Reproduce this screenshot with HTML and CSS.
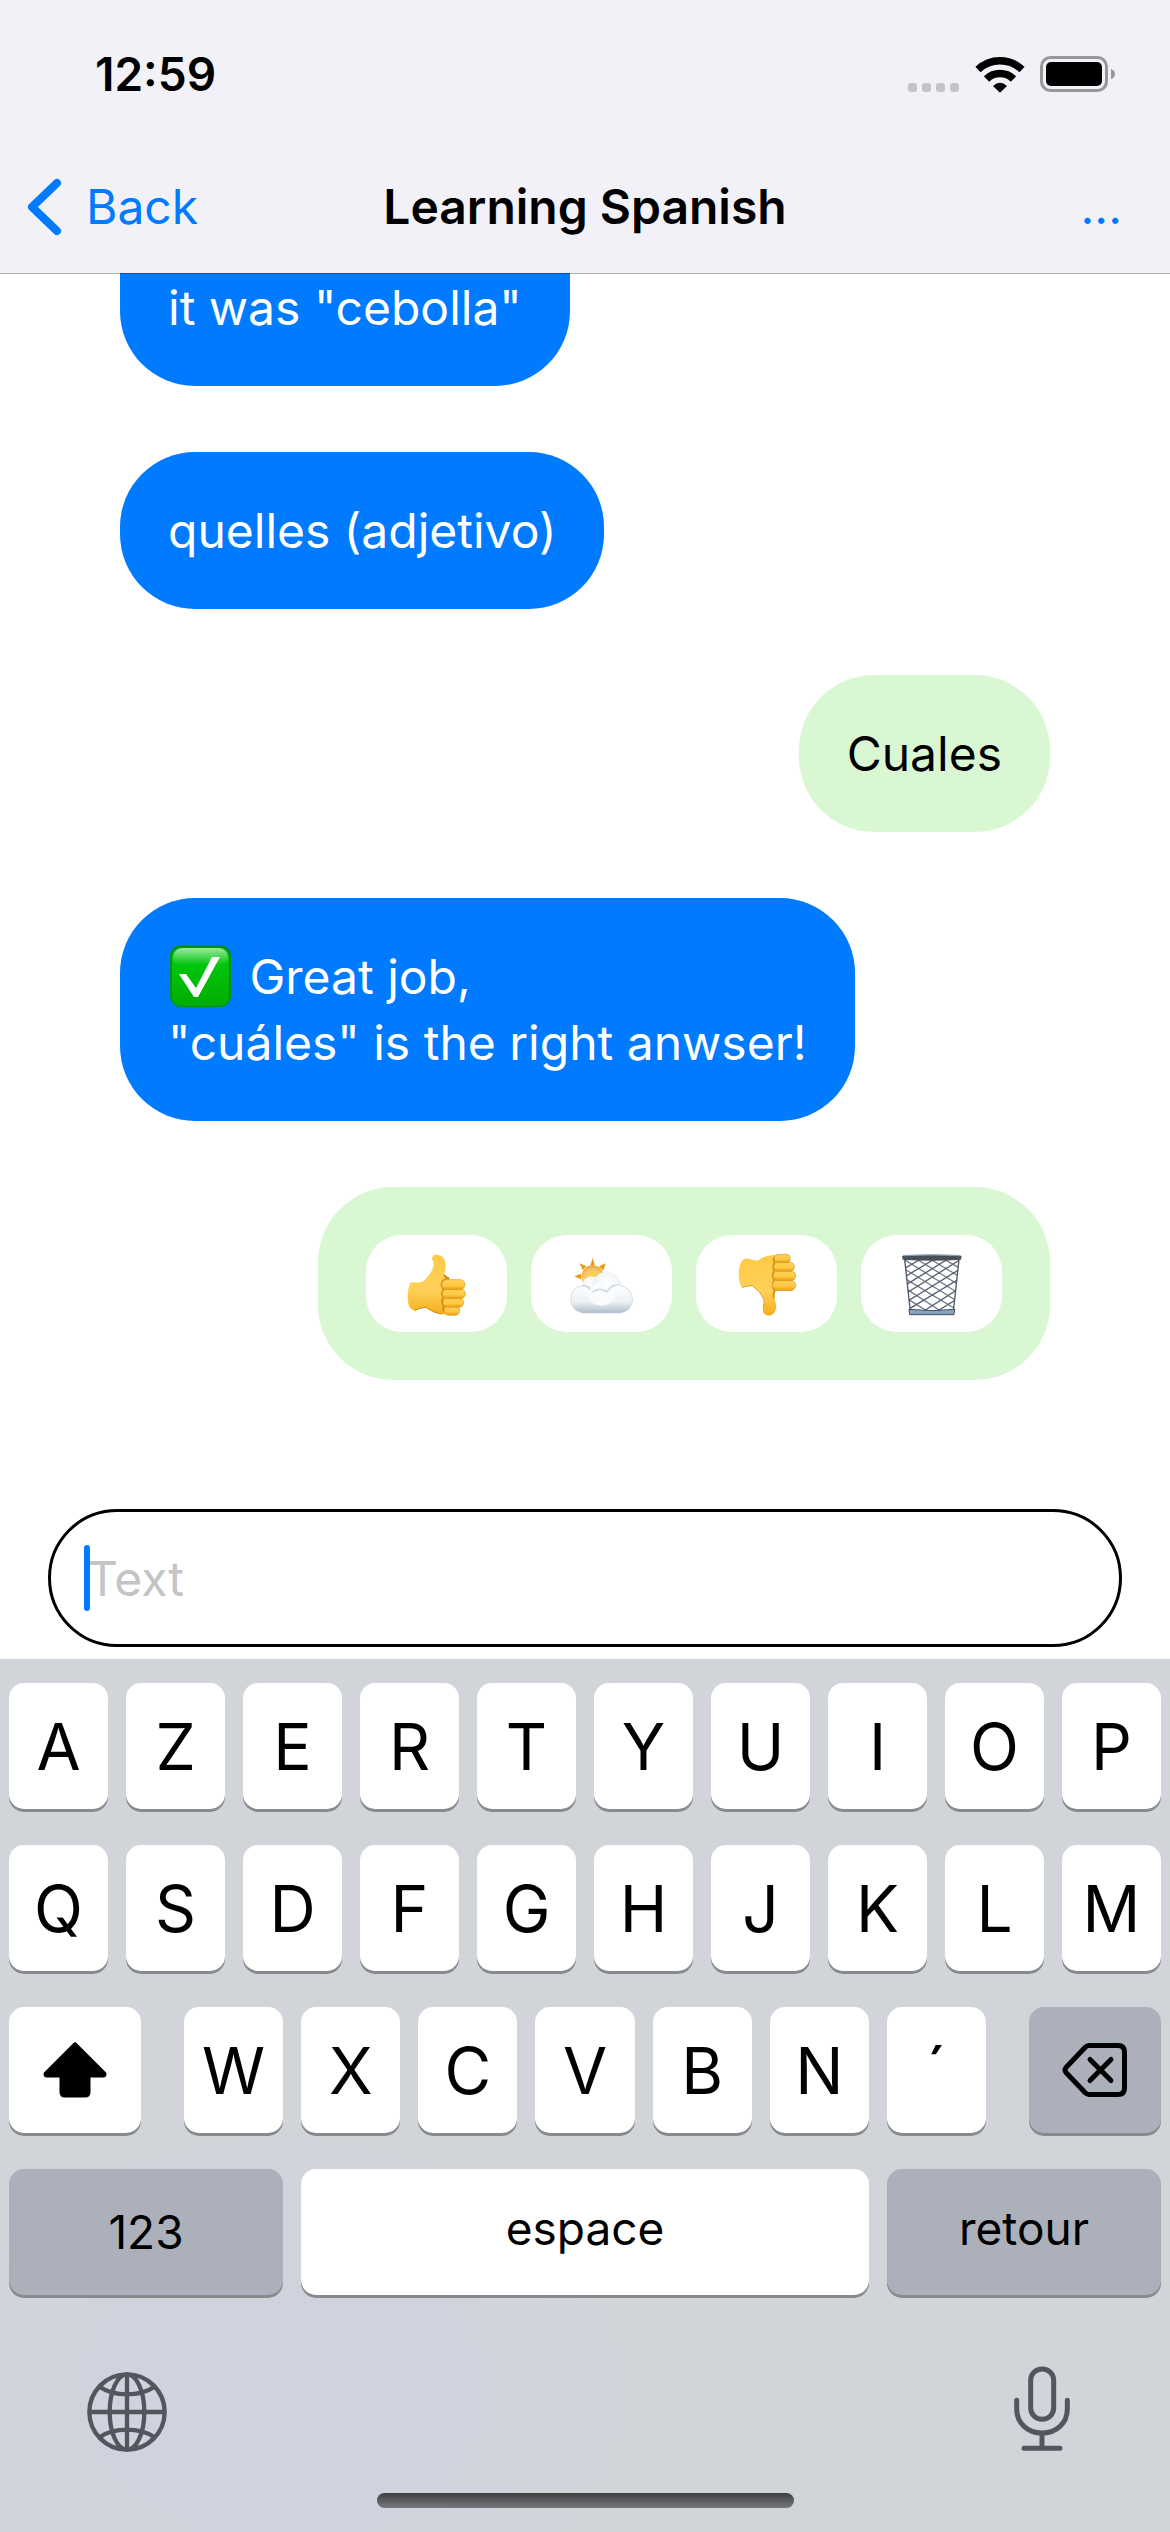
FILE: index.html
```html
<!DOCTYPE html>
<html lang="en">
<head>
<meta charset="utf-8">
<meta name="viewport" content="width=device-width, initial-scale=1">
<title>Learning Spanish</title>
<link rel="stylesheet" href="styles.css">
</head>
<body>
<div class="app">
  <header class="header">
    <div class="status">
      <time class="status-time">12:59</time>
      <div class="status-icons">
        <svg width="52" height="37" viewBox="0 0 52 37" fill="#c4c3c8" aria-hidden="true">
          <rect x="0" y="27" width="9" height="9" rx="3"/><rect x="14" y="27" width="9" height="9" rx="3"/><rect x="28" y="27" width="9" height="9" rx="3"/><rect x="42" y="27" width="9" height="9" rx="3"/>
        </svg>
        <svg width="50" height="37" viewBox="0 0 50 37" aria-hidden="true">
          <path d="M3 13.500A32 32 0 0 1 47 13.500M11.500 23A19.500 19.500 0 0 1 38.500 23" fill="none" stroke="#000" stroke-width="7.500"/>
          <path d="M18 30Q25 23.500 32 30L25.800 36Q25 36.800 24.200 36Z"/>
        </svg>
        <svg width="76" height="37" viewBox="0 0 76 37" aria-hidden="true">
          <rect x="1.500" y="1.500" width="65" height="33" rx="9" fill="none" stroke="#97969b" stroke-width="3"/>
          <rect x="6" y="6" width="56" height="24" rx="5"/>
          <path d="M71 13Q75 14.500 75 18Q75 21.500 71 23Z" fill="#97969b"/>
        </svg>
      </div>
    </div>
    <nav class="nav">
      <a class="nav-back" href="#">
        <svg width="36" height="60" viewBox="0 0 36 60" aria-hidden="true"><path d="M31 6L6 30L31 54" fill="none" stroke="currentColor" stroke-width="8" stroke-linecap="round" stroke-linejoin="round"/></svg>
        <span>Back</span>
      </a>
      <h1 class="nav-title">Learning Spanish</h1>
      <button class="nav-more" type="button" aria-label="More options">...</button>
    </nav>
  </header>

  <main class="thread">
    <p class="bubble bubble-bot bubble-continued">it was "cebolla"</p>
    <p class="bubble bubble-bot">quelles (adjetivo)</p>
    <p class="bubble bubble-user">Cuales</p>
    <p class="bubble bubble-bot"><svg class="check" width="64" height="62" viewBox="0 0 64 62" role="img" aria-label="Correct">
        <defs><linearGradient id="shine" x1="0" y1="0" x2="0" y2="1"><stop offset="0" stop-color="#9be8a3"/><stop offset="1" stop-color="#00c40b"/></linearGradient>
        <linearGradient id="green" x1="0" y1="0" x2="0" y2="1"><stop offset="0" stop-color="#00cf12"/><stop offset="1" stop-color="#00ad00"/></linearGradient></defs>
        <rect x="2" y="0" width="61" height="62" rx="11" fill="#058f16"/>
        <rect x="4" y="3" width="57" height="58" rx="9" fill="url(#green)"/>
        <path d="M5 15Q5 3 15 3H50Q60 3 60 15Q56 20 50 20H15Q9 20 5 15Z" fill="url(#shine)"/>
        <path d="M11 29H18L28 43L44 12H52L30 52H26Z" fill="#fff"/>
      </svg> Great job,<br>"cuáles" is the right anwser!</p>
    <div class="bubble-user options">
      <button class="option" type="button" aria-label="Thumbs up">
        <svg viewBox="310 241 198 198">
          <defs><linearGradient id="skin" x1="0" y1="0" x2="0" y2="1"><stop offset="0" stop-color="#ffcb45"/><stop offset=".6" stop-color="#ffd05a"/><stop offset="1" stop-color="#f5ad1b"/></linearGradient>
          <linearGradient id="finger" x1="0" y1="0" x2="0" y2="1"><stop offset="0" stop-color="#ffd25c"/><stop offset=".6" stop-color="#ffc83e"/><stop offset="1" stop-color="#e59a12"/></linearGradient></defs>
          <path d="M330 335Q350 337 366 333Q392 312 398 287Q400 276 394 264Q395 251 410 252Q430 254 434 276Q437 294 430 312Q433 318 445 324L472 360L460 428Q440 432 424 430Q400 429 376 411Q358 411 342 420Q323 416 321 385Q321 350 330 335Z" fill="url(#skin)"/>
          <path d="M342 419Q357 411 376 410Q400 428 424 430" fill="none" stroke="#d38a10" stroke-width="3"/>
          <path d="M430 312Q433 320 446 324Q424 324 422 343Q423 352 429 357Q419 367 428 380Q419 395 430 406Q424 415 431 424" fill="none" stroke="#cf8b12" stroke-width="5"/>
          <g fill="url(#finger)" stroke="#dc9b1c" stroke-width="2">
            <rect x="430" y="406" width="47" height="28" rx="14"/><rect x="427" y="382" width="62" height="28" rx="14"/><rect x="425" y="355" width="69" height="29" rx="14"/><rect x="423" y="327" width="70" height="30" rx="15"/>
          </g>
        </svg>
      </button>
      <button class="option" type="button" aria-label="So-so">
        <svg viewBox="805 241 198 198">
          <defs><radialGradient id="sun" cx=".5" cy=".65" r=".65"><stop offset="0" stop-color="#ffe22c"/><stop offset=".65" stop-color="#f6c96a"/><stop offset="1" stop-color="#e9a545"/></radialGradient>
          <radialGradient id="puff" cx=".5" cy=".4" r=".65"><stop offset="0" stop-color="#fff"/><stop offset=".65" stop-color="#f1f4f7"/><stop offset="1" stop-color="#b9c5d3"/></radialGradient>
          <linearGradient id="base" x1="0" y1="0" x2="0" y2="1"><stop offset="0" stop-color="#fff"/><stop offset=".6" stop-color="#edf1f5"/><stop offset="1" stop-color="#aebccb"/></linearGradient></defs>
          <path d="M876 262L883 285H869ZM837 278L857 287L846 299ZM915 278L908 300L895 287ZM821 317L841 309V326Z" fill="#e79a12"/>
          <circle cx="876" cy="318" r="34" fill="url(#sun)"/>
          <circle cx="872" cy="346" r="29" fill="url(#puff)"/>
          <circle cx="918" cy="345" r="42" fill="url(#puff)"/>
          <path d="M810 386Q811 349 848 345Q860 344 872 352Q884 340 920 352Q934 342 954 343Q994 350 996 386Q994 421 960 427H846Q812 421 810 386Z" fill="url(#base)" stroke="#c5cfdb" stroke-width="2"/>
          <ellipse cx="902" cy="371" rx="40" ry="34" fill="#fafbfc"/>
          <path d="M875 365Q898 347 918 364Q929 345 948 344M845 345Q858 345 870 357" fill="none" stroke="#ccd5df" stroke-width="4"/>
        </svg>
      </button>
      <button class="option" type="button" aria-label="Thumbs down">
        <svg viewBox="160 241 198 198">
          <path d="M197 263Q213 268 231 270Q250 253 280 253L315 258L320 340L285 362Q278 376 287 405Q286 434 262 435Q243 431 247 409Q253 397 249 385Q240 362 215 345Q200 345 184 351Q174 340 174 305Q178 264 197 263Z" fill="url(#skin)"/>
          <path d="M184 350Q200 345 215 345Q240 362 249 385Q253 397 247 410" fill="none" stroke="#dda02b" stroke-width="3"/>
          <path d="M283 257Q276 266 281 276Q274 288 281 300Q271 316 281 328Q270 345 282 360Q278 366 279 382" fill="none" stroke="#d28d17" stroke-width="5"/>
          <g fill="url(#finger)" stroke="#dc9b1c" stroke-width="2">
            <rect x="275" y="328" width="70" height="32" rx="16"/><rect x="278" y="301" width="67" height="29" rx="14"/><rect x="279" y="275" width="62" height="27" rx="13"/><rect x="281" y="251" width="48" height="25" rx="12"/>
          </g>
        </svg>
      </button>
      <button class="option" type="button" aria-label="Delete">
        <svg viewBox="655 241 198 198">
          <defs><clipPath id="bin"><path d="M671 266H836L819 426H688Z"/></clipPath></defs>
          <g clip-path="url(#bin)" fill="none" stroke-width="4">
            <path stroke="#6e8197" d="M660 400L730 440M660 372L770 440M660 344L810 440M660 316L850 430M660 288L850 404M660 260L850 378M690 254L850 352M730 254L850 326M770 254L850 300M810 254L850 277"/>
            <path stroke="#5b6069" d="M850 400L780 440M850 372L740 440M850 344L700 440M850 316L660 430M850 288L660 404M850 260L660 378M820 254L660 352M780 254L660 326M740 254L660 300M700 254L660 277"/>
          </g>
          <path d="M672 266L689 422M835 266L818 422" fill="none" stroke="#515b68" stroke-width="4"/>
          <path d="M685 416Q754 424 822 416L820 432H687Z" fill="#87a3c4" stroke="#484d55" stroke-width="3"/>
          <path d="M664 256Q754 249 843 256L841 267Q754 273 666 267Z" fill="#4a4e57"/>
          <path d="M667 255Q754 250 840 255" fill="none" stroke="#86a2c0" stroke-width="4"/>
        </svg>
      </button>
    </div>
  </main>

  <form class="composer">
    <label class="field">
      <input class="field-input" type="text" placeholder="Text" aria-label="Message">
      <span class="caret"></span>
    </label>
  </form>

  <section class="keyboard" aria-label="Keyboard">
    <div class="key-row">
      <button class="key" type="button">A</button><button class="key" type="button">Z</button><button class="key" type="button">E</button><button class="key" type="button">R</button><button class="key" type="button">T</button><button class="key" type="button">Y</button><button class="key" type="button">U</button><button class="key" type="button">I</button><button class="key" type="button">O</button><button class="key" type="button">P</button>
    </div>
    <div class="key-row">
      <button class="key" type="button">Q</button><button class="key" type="button">S</button><button class="key" type="button">D</button><button class="key" type="button">F</button><button class="key" type="button">G</button><button class="key" type="button">H</button><button class="key" type="button">J</button><button class="key" type="button">K</button><button class="key" type="button">L</button><button class="key" type="button">M</button>
    </div>
    <div class="key-row key-row-shift">
      <button class="key" type="button" aria-label="Shift">
        <svg width="64" height="56" viewBox="0 0 64 56" aria-hidden="true"><path d="M32 3L61 32Q61 33 60 33H45V50Q45 53 42 53H22Q19 53 19 50V33H4Q3 33 3 32Z" stroke="#000" stroke-width="5" stroke-linejoin="round"/></svg>
      </button>
      <div class="key-group">
        <button class="key" type="button">W</button><button class="key" type="button">X</button><button class="key" type="button">C</button><button class="key" type="button">V</button><button class="key" type="button">B</button><button class="key" type="button">N</button><button class="key" type="button">´</button>
      </div>
      <button class="key key-dark" type="button" aria-label="Backspace">
        <svg width="66" height="56" viewBox="0 0 66 56" aria-hidden="true" fill="none" stroke="#000" stroke-linecap="round" stroke-linejoin="round"><path d="M27 3.500H56Q62.500 3.500 62.500 10V46Q62.500 52.500 56 52.500H27Q25 52.500 23 50.500L4 30.500Q2 28 4 25.500L23 5.500Q25 3.500 27 3.500Z" stroke-width="5"/><path d="M28 17.500L49 38.500M49 17.500L28 38.500" stroke-width="5"/></svg>
      </button>
    </div>
    <div class="key-row key-row-space">
      <button class="key key-dark key-label" type="button">123</button>
      <button class="key key-label key-word" type="button">espace</button>
      <button class="key key-dark key-label key-word" type="button">retour</button>
    </div>
    <div class="tools">
      <button class="tool" type="button" aria-label="Change keyboard">
        <svg width="80" height="80" viewBox="261 216 240 240" fill="none" stroke="currentColor" stroke-width="13" aria-hidden="true"><circle cx="381" cy="336" r="113"/><ellipse cx="381" cy="336" rx="52" ry="113"/><path d="M381 223V449M268 336H494M300 261Q332 283 381 283Q430 283 462 261M300 411Q332 389 381 389Q430 389 462 411"/></svg>
      </button>
      <button class="tool" type="button" aria-label="Dictate">
        <svg width="56" height="86" viewBox="731 198 168 258" fill="none" stroke="currentColor" stroke-width="15" stroke-linecap="round" aria-hidden="true"><rect x="781" y="207" width="69" height="151" rx="34"/><path d="M739 301V326C739 370 772 399 815 399S891 370 891 326V301M815 399V445M761 445H869"/></svg>
      </button>
    </div>
    <div class="home-indicator"></div>
  </section>
</div>
</body>
</html>
```
FILE: styles.css
```css
* { box-sizing: border-box; }

body {
  margin: 0;
  background: #fff;
  color: #000;
  font-family: Inter, "Liberation Sans", sans-serif;
  font-size: 48px;
}

button {
  border: 0;
  padding: 0;
  background: none;
  color: inherit;
  font: inherit;
}

svg { display: block; }

.app {
  display: flex;
  flex-direction: column;
  height: 100vh;
}

/* Header */
.header {
  position: relative;
  z-index: 1;
  background: #f2f1f7;
  box-shadow: 0 1px 0 rgba(0, 0, 0, .3);
}

.status {
  display: flex;
  justify-content: space-between;
  align-items: center;
  height: 132px;
  padding: 16px 54px 0 95px;
}

.status-time { font-size: 46px; font-weight: 600; }

.status-icons { display: flex; gap: 15px; }

.nav {
  display: grid;
  grid-template-columns: 1fr auto 1fr;
  align-items: center;
  height: 141px;
  padding: 8px 26px 0;
}

.nav-back {
  display: flex;
  align-items: center;
  gap: 24px;
  color: #007aff;
  text-decoration: none;
}

.nav-title { margin: 0; font-size: 48px; font-weight: 600; }

.nav-more { justify-self: end; padding-right: 22px; color: #007aff; }

/* Conversation */
.thread {
  flex: 1;
  min-height: 0;
  display: flex;
  flex-direction: column;
  justify-content: flex-end;
  align-items: flex-start;
  gap: 66px;
  padding: 0 120px 129px;
  overflow: hidden;
}

.bubble {
  flex: none;
  margin: 0;
  padding: 46px 48px 45px;
  border-radius: 75px;
  line-height: 66px;
}

.bubble-bot { background: #007aff; color: #fff; }

.bubble-continued { border-radius: 0 0 75px 75px; }

.bubble-user { align-self: flex-end; background: #daf7d4; }

.check { display: inline-block; margin-right: 4px; vertical-align: -13px; }

.options {
  flex: none;
  display: flex;
  gap: 24px;
  padding: 48px;
  border-radius: 75px;
}

.option {
  display: grid;
  place-items: center;
  width: 141px;
  height: 97px;
  border-radius: 36px;
  background: #fff;
}

.option svg { width: 66px; height: 66px; }

/* Message field */
.composer { padding: 0 48px 12px; }

.field { display: block; position: relative; }

.field-input {
  display: block;
  width: 100%;
  height: 138px;
  padding: 0 36px;
  border: 3px solid #000;
  border-radius: 69px;
  background: #fff;
  color: #000;
  font: inherit;
  outline: 0;
}

.field-input::placeholder { color: #c4c4c6; opacity: 1; }

.caret {
  position: absolute;
  left: 36px;
  top: 36px;
  width: 6px;
  height: 66px;
  border-radius: 3px;
  background: #007aff;
}

/* Keyboard */
.keyboard {
  display: flex;
  flex-direction: column;
  gap: 36px;
  padding: 24px 9px;
  background: radial-gradient(ellipse 30% 30% at 24% 84%, #d0d3dd 50%, #d1d4d9) #d1d4d9;
}

.key-row,
.key-group { display: flex; gap: 18px; }

.key {
  flex: 1 1 0;
  display: grid;
  place-items: center;
  min-width: 0;
  height: 126px;
  border-radius: 15px;
  background: #fff;
  box-shadow: 0 3px 0 #898a8d;
  font-size: 64px;
}

.key-dark { background: #abb0bb; }

.key-label { font-size: 46px; }

.key-word { padding-bottom: 8px; }

.key-row-shift { gap: 43px; }
.key-row-shift > .key { flex-grow: 132; }
.key-group { flex: 802 1 0; }

.key-row-space .key { flex-grow: 274; }
.key-row-space .key:nth-child(2) { flex-grow: 568; }

.tools {
  display: flex;
  justify-content: space-between;
  align-items: flex-end;
  padding: 35px 91px 5px 78px;
  color: #52565e;
}

.home-indicator {
  align-self: center;
  width: 417px;
  height: 15px;
  border-radius: 8px;
  background: linear-gradient(#3d3e40, #77787b);
}
```
